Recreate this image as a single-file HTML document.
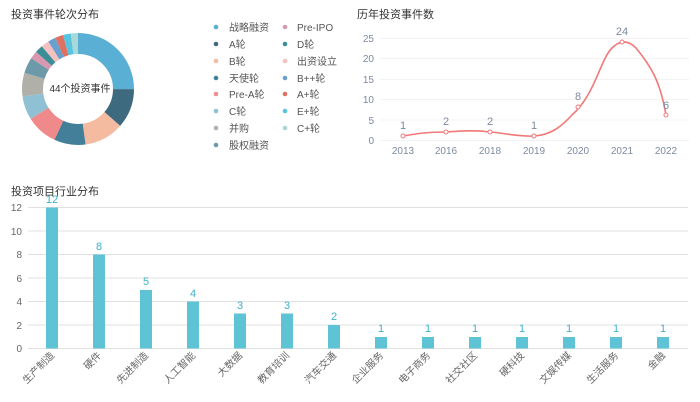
<!DOCTYPE html>
<html><head><meta charset="utf-8"><style>
html,body{margin:0;padding:0;background:#fff;width:700px;height:402px;overflow:hidden}
svg{display:block;font-family:"Liberation Sans","Noto Sans CJK SC",sans-serif}
</style></head><body>
<svg width="700" height="402" viewBox="0 0 700 402">
<text x="11" y="18" font-size="11" fill="#333">投资事件轮次分布</text>
<g transform="rotate(-90 78 89)" fill="none" stroke-width="21">
<circle cx="78" cy="89" r="45.5" stroke="#5aafd4" stroke-dasharray="71.5 300" stroke-dashoffset="0"/>
<circle cx="78" cy="89" r="45.5" stroke="#3e6a80" stroke-dasharray="32.5 300" stroke-dashoffset="-71.5"/>
<circle cx="78" cy="89" r="45.5" stroke="#f5bba0" stroke-dasharray="32.5 300" stroke-dashoffset="-104"/>
<circle cx="78" cy="89" r="45.5" stroke="#447f9a" stroke-dasharray="26 300" stroke-dashoffset="-136.5"/>
<circle cx="78" cy="89" r="45.5" stroke="#f08a8a" stroke-dasharray="26 300" stroke-dashoffset="-162.5"/>
<circle cx="78" cy="89" r="45.5" stroke="#90c0d4" stroke-dasharray="19.5 300" stroke-dashoffset="-188.5"/>
<circle cx="78" cy="89" r="45.5" stroke="#b0b0a8" stroke-dasharray="19.5 300" stroke-dashoffset="-208"/>
<circle cx="78" cy="89" r="45.5" stroke="#6c9aa8" stroke-dasharray="13 300" stroke-dashoffset="-227.5"/>
<circle cx="78" cy="89" r="45.5" stroke="#d898b0" stroke-dasharray="6.5 300" stroke-dashoffset="-240.5"/>
<circle cx="78" cy="89" r="45.5" stroke="#3a8e96" stroke-dasharray="6.5 300" stroke-dashoffset="-247"/>
<circle cx="78" cy="89" r="45.5" stroke="#f4c0c0" stroke-dasharray="6.5 300" stroke-dashoffset="-253.5"/>
<circle cx="78" cy="89" r="45.5" stroke="#6aa0d0" stroke-dasharray="6.5 300" stroke-dashoffset="-260"/>
<circle cx="78" cy="89" r="45.5" stroke="#e07060" stroke-dasharray="6.5 300" stroke-dashoffset="-266.5"/>
<circle cx="78" cy="89" r="45.5" stroke="#58c4e0" stroke-dasharray="6.5 300" stroke-dashoffset="-273"/>
<circle cx="78" cy="89" r="45.5" stroke="#a8d8d8" stroke-dasharray="6.5 300" stroke-dashoffset="-279.5"/>
</g>
<text x="80" y="92" font-size="10" fill="#333" text-anchor="middle">44个投资事件</text>
<g font-size="10" fill="#555">
<circle cx="216" cy="27" r="2.3" fill="#5aafd4"/><text x="229" y="31">战略融资</text>
<circle cx="216" cy="44" r="2.3" fill="#3e6a80"/><text x="229" y="48">A轮</text>
<circle cx="216" cy="61" r="2.3" fill="#f5bba0"/><text x="229" y="65">B轮</text>
<circle cx="216" cy="78" r="2.3" fill="#447f9a"/><text x="229" y="82">天使轮</text>
<circle cx="216" cy="94" r="2.3" fill="#f08a8a"/><text x="229" y="98">Pre-A轮</text>
<circle cx="216" cy="111" r="2.3" fill="#90c0d4"/><text x="229" y="115">C轮</text>
<circle cx="216" cy="128" r="2.3" fill="#b0b0a8"/><text x="229" y="132">并购</text>
<circle cx="216" cy="145" r="2.3" fill="#6c9aa8"/><text x="229" y="149">股权融资</text>
<circle cx="285" cy="27" r="2.3" fill="#d898b0"/><text x="297" y="31">Pre-IPO</text>
<circle cx="285" cy="44" r="2.3" fill="#3a8e96"/><text x="297" y="48">D轮</text>
<circle cx="285" cy="61" r="2.3" fill="#f4c0c0"/><text x="297" y="65">出资设立</text>
<circle cx="285" cy="78" r="2.3" fill="#6aa0d0"/><text x="297" y="82">B++轮</text>
<circle cx="285" cy="94" r="2.3" fill="#e07060"/><text x="297" y="98">A+轮</text>
<circle cx="285" cy="111" r="2.3" fill="#58c4e0"/><text x="297" y="115">E+轮</text>
<circle cx="285" cy="128" r="2.3" fill="#a8d8d8"/><text x="297" y="132">C+轮</text>
</g>

<text x="357" y="18" font-size="11" fill="#333">历年投资事件数</text>
<g stroke="#f3f3f3" stroke-width="1">
<line x1="380" y1="38.5" x2="689" y2="38.5"/><line x1="380" y1="58.5" x2="689" y2="58.5"/>
<line x1="380" y1="79.5" x2="689" y2="79.5"/><line x1="380" y1="99.5" x2="689" y2="99.5"/>
<line x1="380" y1="120" x2="689" y2="120"/><line x1="380" y1="140.5" x2="689" y2="140.5"/>
</g>
<g font-size="10" fill="#7d8aa0" text-anchor="end">
<text x="374" y="42">25</text><text x="374" y="62">20</text><text x="374" y="83">15</text>
<text x="374" y="103">10</text><text x="374" y="124">5</text><text x="374" y="144">0</text>
</g>
<g font-size="10" fill="#7d8aa0" text-anchor="middle">
<text x="403" y="154">2013</text><text x="446" y="154">2016</text><text x="490" y="154">2018</text>
<text x="534" y="154">2019</text><text x="578" y="154">2020</text><text x="622" y="154">2021</text><text x="666" y="154">2022</text>
</g>
<path d="M403 136 C420 133,430 132,446 132 C462 131,475 130,490 132 C505 133,518 137,534 136 C550 135,560 128,572 115 C595 95,600 60,612 48 C620 40,628 40,636 48 C650 65,660 80,666 115" fill="none" stroke="#f07878" stroke-width="1.6"/>
<g fill="#fff" stroke="#f07878" stroke-width="1">
<circle cx="403" cy="136" r="2"/><circle cx="446" cy="132" r="2"/><circle cx="490" cy="132" r="2"/>
<circle cx="534" cy="136" r="2"/><circle cx="578" cy="107" r="2"/><circle cx="622" cy="42" r="2"/><circle cx="666" cy="115" r="2"/>
</g>
<g font-size="11" fill="#7d8aa0" text-anchor="middle">
<text x="403" y="129">1</text><text x="446" y="125">2</text><text x="490" y="125">2</text>
<text x="534" y="129">1</text><text x="578" y="100">8</text><text x="622" y="35">24</text><text x="666" y="109">6</text>
</g>

<text x="11" y="195" font-size="11" fill="#333">投资项目行业分布</text>
<g stroke="#e0e0e0" stroke-width="1">
<line x1="28" y1="207.5" x2="688" y2="207.5"/><line x1="28" y1="231" x2="688" y2="231"/>
<line x1="28" y1="254.5" x2="688" y2="254.5"/><line x1="28" y1="278" x2="688" y2="278"/>
<line x1="28" y1="301.5" x2="688" y2="301.5"/><line x1="28" y1="325" x2="688" y2="325"/>
<line x1="28" y1="348.5" x2="688" y2="348.5"/>
</g>
<g font-size="10" fill="#666" text-anchor="end">
<text x="22" y="211">12</text><text x="22" y="235">10</text><text x="22" y="258">8</text>
<text x="22" y="282">6</text><text x="22" y="305">4</text><text x="22" y="329">2</text><text x="22" y="352">0</text>
</g>
<g fill="#5fc3d6">
<rect x="46" y="207.5" width="12" height="141"/>
<rect x="93" y="254.5" width="12" height="94"/>
<rect x="140" y="290" width="12" height="58.5"/>
<rect x="187" y="301.5" width="12" height="47"/>
<rect x="234" y="313.5" width="12" height="35"/>
<rect x="281" y="313.5" width="12" height="35"/>
<rect x="328" y="325" width="12" height="23.5"/>
<rect x="375" y="337" width="12" height="11.5"/>
<rect x="422" y="337" width="12" height="11.5"/>
<rect x="469" y="337" width="12" height="11.5"/>
<rect x="516" y="337" width="12" height="11.5"/>
<rect x="563" y="337" width="12" height="11.5"/>
<rect x="610" y="337" width="12" height="11.5"/>
<rect x="657" y="337" width="12" height="11.5"/>
</g>
<g font-size="11" fill="#3fb0c8" text-anchor="middle">
<text x="52" y="203">12</text><text x="99" y="250">8</text><text x="146" y="285">5</text><text x="193" y="297">4</text>
<text x="240" y="309">3</text><text x="287" y="309">3</text><text x="334" y="320">2</text>
<text x="381" y="332">1</text><text x="428" y="332">1</text><text x="475" y="332">1</text><text x="522" y="332">1</text>
<text x="569" y="332">1</text><text x="616" y="332">1</text><text x="663" y="332">1</text>
</g>
<g font-size="10" fill="#666" text-anchor="end">
<text transform="translate(55 356) rotate(-45)">生产制造</text>
<text transform="translate(102 356) rotate(-45)">硬件</text>
<text transform="translate(149 356) rotate(-45)">先进制造</text>
<text transform="translate(196 356) rotate(-45)">人工智能</text>
<text transform="translate(243 356) rotate(-45)">大数据</text>
<text transform="translate(290 356) rotate(-45)">教育培训</text>
<text transform="translate(337 356) rotate(-45)">汽车交通</text>
<text transform="translate(384 356) rotate(-45)">企业服务</text>
<text transform="translate(431 356) rotate(-45)">电子商务</text>
<text transform="translate(478 356) rotate(-45)">社交社区</text>
<text transform="translate(525 356) rotate(-45)">硬科技</text>
<text transform="translate(572 356) rotate(-45)">文娱传媒</text>
<text transform="translate(619 356) rotate(-45)">生活服务</text>
<text transform="translate(666 356) rotate(-45)">金融</text>
</g>
</svg>
</body></html>
